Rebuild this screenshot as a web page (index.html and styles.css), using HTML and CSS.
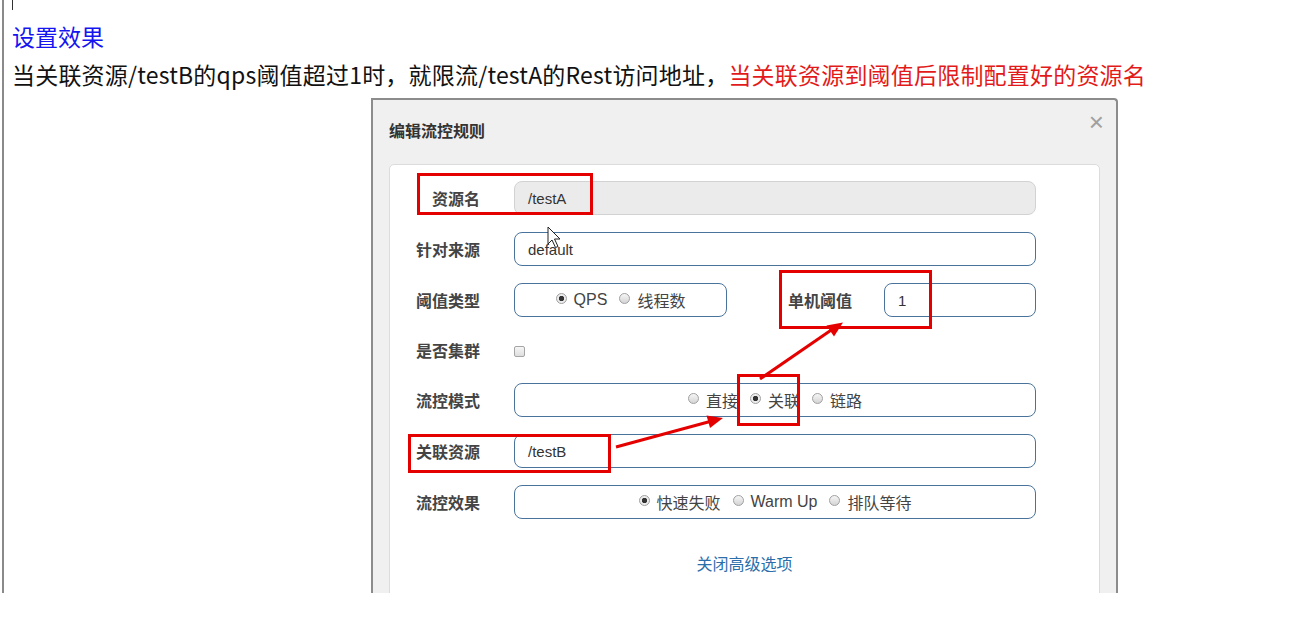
FILE: index.html
```html
<!DOCTYPE html>
<html>
	<head>
		<title>设置效果</title>
		<link rel="stylesheet" href="styles.css">
	</head>
	<body>
		<div class="page">
			<div class="caret"></div>
			<h2 class="doc-title">设置效果</h2>
			<p class="doc-line">当关联资源/testB的qps阈值超过1时，就限流/testA的Rest访问地址，<span class="hl">当关联资源到阈值后限制配置好的资源名</span></p>

			<div class="modal">
				<div class="modal-header">
					<span class="modal-title">编辑流控规则</span>
					<span class="close">×</span>
				</div>
				<div class="panel">
					<div class="row">
						<label class="lbl">资源名</label>
						<div class="field wide disabled">/testA</div>
					</div>
					<div class="row">
						<label class="lbl">针对来源</label>
						<div class="field wide">default</div>
					</div>
					<div class="row">
						<label class="lbl">阈值类型</label>
						<div class="field choice short">
							<span class="opt"><i class="dot on"></i>QPS</span>
							<span class="opt"><i class="dot"></i>线程数</span>
						</div>
						<label class="lbl lbl-mid">单机阈值</label>
						<div class="field small">1</div>
					</div>
					<div class="row check-row">
						<label class="lbl">是否集群</label>
						<i class="checkbox"></i>
					</div>
					<div class="row">
						<label class="lbl">流控模式</label>
						<div class="field wide choice">
							<span class="opt"><i class="dot"></i>直接</span>
							<span class="opt"><i class="dot on"></i>关联</span>
							<span class="opt"><i class="dot"></i>链路</span>
						</div>
					</div>
					<div class="row">
						<label class="lbl">关联资源</label>
						<div class="field wide">/testB</div>
					</div>
					<div class="row">
						<label class="lbl">流控效果</label>
						<div class="field wide choice">
							<span class="opt"><i class="dot on"></i>快速失败</span>
							<span class="opt"><i class="dot"></i>Warm Up</span>
							<span class="opt"><i class="dot"></i>排队等待</span>
						</div>
					</div>
					<div class="more"><a href="#">关闭高级选项</a></div>
				</div>
			</div>

			<!-- hand-drawn annotations over the screenshot -->
			<svg class="marks" width="1290" height="593" viewBox="0 0 1290 593">
				<g fill="none" stroke="#e50000" stroke-width="3">
					<rect x="418.5" y="174.5" width="173" height="39"/>
					<rect x="780.5" y="271.5" width="150" height="56"/>
					<rect x="738.5" y="375.5" width="60" height="49"/>
					<rect x="409.5" y="435.5" width="200" height="36"/>
					<line x1="616" y1="447" x2="710" y2="421.5"/>
					<line x1="760" y1="379" x2="832" y2="329.5"/>
				</g>
				<g fill="#e50000">
					<polygon points="723,418 710,428 706.5,415.5"/>
					<polygon points="843,322.5 834,336.5 826.5,325.5"/>
				</g>
				<path d="M548 227 L548 244 L552 240 L555.5 247.5 L558 246.5 L554.5 239 L560 239 Z" fill="#fff" stroke="#222" stroke-width="1"/>
			</svg>
		</div>
	</body>
</html>
```

FILE: styles.css
```css
* {
	box-sizing: border-box;
}
body {
	margin: 0;
	background: #fff;
	font-family: "Noto Sans CJK SC", "Liberation Sans", sans-serif;
}
.page {
	position: relative;
	height: 593px;
	margin-left: 2px;
	border-left: 2px solid #8a8a8a;
	overflow: hidden;
}
.caret {
	width: 1px;
	height: 10px;
	margin-left: 8px;
	background: #333;
}
.doc-title {
	margin: 7px 0 0;
	padding-left: 8px;
	font-size: 23px;
	font-weight: normal;
	line-height: 38px;
	color: #1515f0;
}
.doc-line {
	margin: 0;
	padding-left: 8px;
	font-size: 23px;
	line-height: 38px;
	letter-spacing: 0.2px;
	color: #111;
	white-space: nowrap;
}
	.hl {
		color: #e31a1a;
	}
.modal {
	width: 747px;
	height: 520px;
	margin: 5px 0 0 367px;
	background: #f0f0f0;
	border: 2px solid #8c8c8c;
	border-bottom: none;
	border-top-right-radius: 4px;
}
	.modal-header {
		display: flex;
		justify-content: space-between;
		height: 64px;
		padding: 19px 12px 0 16px;
	}
		.modal-title {
			font-size: 16px;
			line-height: 22px;
			font-weight: bold;
			color: #333;
		}
		.close {
			margin-top: -12px;
			font-family: "Liberation Sans", sans-serif;
			font-size: 26px;
			line-height: 30px;
			color: #a0a0a0;
		}
	.panel {
		height: 460px;
		margin: 0 16px;
		padding-top: 16px;
		background: #fff;
		border: 1px solid #dcdcdc;
		border-radius: 5px 5px 0 0;
	}
.row {
	display: flex;
	align-items: center;
	height: 34px;
	margin-bottom: 17px;
}
	.lbl {
		width: 90px;
		margin-right: 34px;
		text-align: right;
		font-size: 16px;
		font-weight: bold;
		color: #444;
	}
	.lbl-mid {
		width: 125px;
		margin-right: 32px;
	}
	.check-row {
		height: 32px;
	}
	.checkbox {
		display: inline-block;
		width: 11px;
		height: 11px;
		margin-top: 3px;
		border: 1px solid #a5a5a5;
		border-radius: 2px;
		background: linear-gradient(#f6f6f6, #dedede);
	}
.field {
	display: flex;
	align-items: center;
	height: 34px;
	padding-left: 13px;
	border: 1px solid #4a739c;
	border-radius: 8px;
	font-family: "Liberation Sans", "Noto Sans CJK SC", sans-serif;
	font-size: 15px;
	color: #333;
}
	.wide {
		width: 522px;
	}
	.short {
		width: 213px;
	}
	.small {
		width: 152px;
	}
	.disabled {
		background: #ebebeb;
		border-color: #d2d2d2;
	}
	.choice {
		justify-content: center;
		gap: 12px;
		padding-left: 0;
		color: #444;
	}
		.opt {
			display: flex;
			align-items: center;
			gap: 7px;
			font-family: "Liberation Sans", "Noto Sans CJK SC", sans-serif;
			font-size: 16px;
		}
		.dot {
			display: inline-block;
			width: 11px;
			height: 11px;
			margin-top: -3px;
			border: 1px solid #a0a0a0;
			border-radius: 50%;
			background: linear-gradient(#f6f6f6, #d4d4d4);
		}
		.dot.on {
			background: radial-gradient(circle, #333 0 2.4px, #ececec 3px);
		}
.more {
	margin-top: 33px;
	text-align: center;
	font-size: 16px;
	line-height: 22px;
}
	.more a {
		color: #2a6eaa;
		text-decoration: none;
	}
.marks {
	position: absolute;
	left: -4px;
	top: 0;
	pointer-events: none;
}
```
